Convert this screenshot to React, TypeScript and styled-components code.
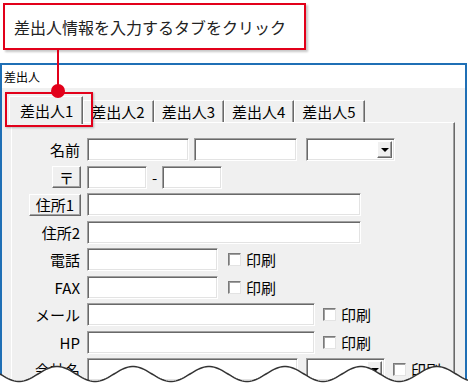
import React from 'react';
import styled, { createGlobalStyle } from 'styled-components';

const RED = '#e2001a';

const GlobalStyle = createGlobalStyle`
  html, body {
    margin: 0;
    padding: 0;
    background: #fff;
  }
  body {
    font-family: "Noto Sans CJK JP", "Noto Sans", sans-serif;
    color: #000;
  }
`;

const Page = styled.div`
  position: relative;
  width: 468px;
  height: 384px;
  overflow: hidden;
  box-sizing: border-box;
  padding-top: 3px;
  background: #fff;
`;

const Callout = styled.div`
  margin-left: 3px;
  width: 303px;
  height: 47px;
  box-sizing: border-box;
  border: 2px solid ${RED};
  box-shadow: 2px 2px 2px rgba(0, 0, 0, 0.22);
  display: flex;
  align-items: center;
  padding-left: 9px;
  font-size: 16px;
  line-height: 1;
  color: #222;
  background: #fff;
`;

const Window = styled.div`
  margin-top: 13px;
  width: 467px;
  height: 330px;
  box-sizing: border-box;
  border: solid #1f6fb5;
  border-width: 2px 2px 0 2px;
  background: #f0f0f0;
`;

const TitleBar = styled.div`
  height: 23px;
  padding-left: 2px;
  background: #fff;
  font-size: 12px;
  line-height: 23px;
`;

const Body = styled.div`
  padding: 8px 0 0 7px;
`;

const TabStrip = styled.div`
  display: flex;
  align-items: flex-end;
  height: 26px;
  position: relative;
  z-index: 1;
`;

const Tab = styled.div<{ $active?: boolean }>`
  box-sizing: border-box;
  height: ${(p) => (p.$active ? 28 : 22)}px;
  margin-bottom: ${(p) => (p.$active ? -2 : 0)}px;
  padding: ${(p) => (p.$active ? '0 9px 0 10px' : '0 8px 0 7px')};
  display: flex;
  align-items: center;
  font-size: 15px;
  line-height: 1;
  background: #f0f0f0;
  border-top: 1px solid #fff;
  border-left: 1px solid #fff;
  border-right: 1px solid #696969;
  box-shadow: inset -1px 0 0 #a0a0a0;
`;

const Panel = styled.div`
  margin-left: 2px;
  width: 444px;
  height: 260px;
  box-sizing: border-box;
  border: 1px solid;
  border-color: #fff #696969 #696969 #fff;
  box-shadow: inset -1px 0 0 #a0a0a0;
  padding-top: 15px;
`;

const Form = styled.div`
  display: grid;
  grid-template-columns: 69px 1fr;
  grid-auto-rows: 23px;
  column-gap: 6px;
  row-gap: 4.5px;
`;

const Label = styled.div`
  justify-self: end;
  align-self: center;
  padding-right: 1px;
  font-size: 15px;
  line-height: 23px;
  white-space: nowrap;
`;

const RaisedButton = styled.div`
  justify-self: end;
  align-self: center;
  height: 22px;
  box-sizing: border-box;
  padding: 0 6px;
  display: flex;
  align-items: center;
  font-size: 15px;
  line-height: 1;
  background: #f0f0f0;
  border: 1px solid;
  border-color: #fff #696969 #696969 #fff;
  box-shadow: inset -1px -1px 0 #a0a0a0;
`;

const Fields = styled.div`
  display: flex;
  align-items: center;
`;

const TextBox = styled.div<{ $w: number; $ml?: number }>`
  width: ${(p) => p.$w}px;
  height: 23px;
  margin-left: ${(p) => p.$ml ?? 0}px;
  box-sizing: border-box;
  background: #fff;
  border: 1px solid;
  border-color: #a0a0a0 #fff #fff #a0a0a0;
  box-shadow: inset 1px 1px 0 #696969, inset -1px -1px 0 #e3e3e3;
`;

const Combo = styled(TextBox)`
  display: flex;
  justify-content: flex-end;
  align-items: stretch;
  padding: 2px;
`;

const DropButton = styled.div`
  width: 15px;
  box-sizing: border-box;
  display: flex;
  align-items: center;
  justify-content: center;
  background: #f0f0f0;
  border: 1px solid;
  border-color: #fff #696969 #696969 #fff;
  box-shadow: inset -1px -1px 0 #a0a0a0;

  &::after {
    content: '';
    border-left: 4px solid transparent;
    border-right: 4px solid transparent;
    border-top: 4px solid #000;
  }
`;

const Dash = styled.span`
  width: 15px;
  text-align: center;
  font-size: 15px;
  line-height: 1;
`;

const CheckBox = styled.span<{ $ml: number }>`
  width: 13px;
  height: 13px;
  margin-left: ${(p) => p.$ml}px;
  box-sizing: border-box;
  background: #fff;
  border: 1px solid;
  border-color: #7a7a7a #e3e3e3 #e3e3e3 #7a7a7a;
  box-shadow: inset 1px 1px 0 #a0a0a0;
`;

const PrintLabel = styled.span`
  margin-left: 5px;
  font-size: 15px;
  line-height: 1;
  white-space: nowrap;
`;

const Highlight = styled.div`
  position: absolute;
  left: 5px;
  top: 92px;
  width: 88px;
  height: 35px;
  box-sizing: border-box;
  border: 2px solid ${RED};
  box-shadow: 1px 1px 2px rgba(0, 0, 0, 0.25);
  z-index: 2;
`;

const Connector = styled.div`
  position: absolute;
  left: 57px;
  top: 50px;
  width: 2px;
  height: 40px;
  background: ${RED};
  z-index: 3;
`;

const Dot = styled.div`
  position: absolute;
  left: 51px;
  top: 84px;
  width: 14px;
  height: 14px;
  border-radius: 50%;
  background: ${RED};
  z-index: 3;
`;

const WaveSvg = styled.svg`
  position: absolute;
  left: 0;
  bottom: 0;
  z-index: 4;
`;

// sine edge that cuts off the dialog at the bottom
const wavePoints: string[] = [];
for (let x = 0; x <= 468; x += 2) {
  const y = 14 - 7.5 * Math.cos((2 * Math.PI * (x - 57)) / 76);
  wavePoints.push(`${x},${y.toFixed(2)}`);
}
const waveLine = 'M' + wavePoints.join(' L');
const waveFill = `${waveLine} L468,24 L0,24 Z`;

const Print = ({ ml }: { ml: number }) => (
  <>
    <CheckBox $ml={ml} />
    <PrintLabel>印刷</PrintLabel>
  </>
);

const DropDown = ({ w, ml }: { w: number; ml?: number }) => (
  <Combo $w={w} $ml={ml}>
    <DropButton />
  </Combo>
);

const App = () => {
  return (
    <>
      <GlobalStyle />
      <Page>
        <Callout>差出人情報を入力するタブをクリック</Callout>
        <Window>
          <TitleBar>差出人</TitleBar>
          <Body>
            <TabStrip>
              <Tab $active>差出人1</Tab>
              <Tab>差出人2</Tab>
              <Tab>差出人3</Tab>
              <Tab>差出人4</Tab>
              <Tab>差出人5</Tab>
            </TabStrip>
            <Panel>
              <Form>
                <Label>名前</Label>
                <Fields>
                  <TextBox $w={102} />
                  <TextBox $w={103} $ml={5} />
                  <DropDown w={89} ml={9} />
                </Fields>

                <RaisedButton>〒</RaisedButton>
                <Fields>
                  <TextBox $w={60} />
                  <Dash>-</Dash>
                  <TextBox $w={60} />
                </Fields>

                <RaisedButton>住所1</RaisedButton>
                <Fields>
                  <TextBox $w={274} />
                </Fields>

                <Label>住所2</Label>
                <Fields>
                  <TextBox $w={274} />
                </Fields>

                <Label>電話</Label>
                <Fields>
                  <TextBox $w={131} />
                  <Print ml={10} />
                </Fields>

                <Label>FAX</Label>
                <Fields>
                  <TextBox $w={131} />
                  <Print ml={10} />
                </Fields>

                <Label>メール</Label>
                <Fields>
                  <TextBox $w={228} />
                  <Print ml={8} />
                </Fields>

                <Label>HP</Label>
                <Fields>
                  <TextBox $w={228} />
                  <Print ml={8} />
                </Fields>

                <Label>会社名</Label>
                <Fields>
                  <TextBox $w={211} />
                  <DropDown w={79} ml={8} />
                  <Print ml={8} />
                </Fields>
              </Form>
            </Panel>
          </Body>
        </Window>
        <Highlight />
        <Connector />
        <Dot />
        <WaveSvg width="468" height="24" viewBox="0 0 468 24">
          <path d={waveFill} fill="#fff" />
          <path d={waveLine} fill="none" stroke="#333" strokeWidth="1.5" />
        </WaveSvg>
      </Page>
    </>
  );
};

export default App;
